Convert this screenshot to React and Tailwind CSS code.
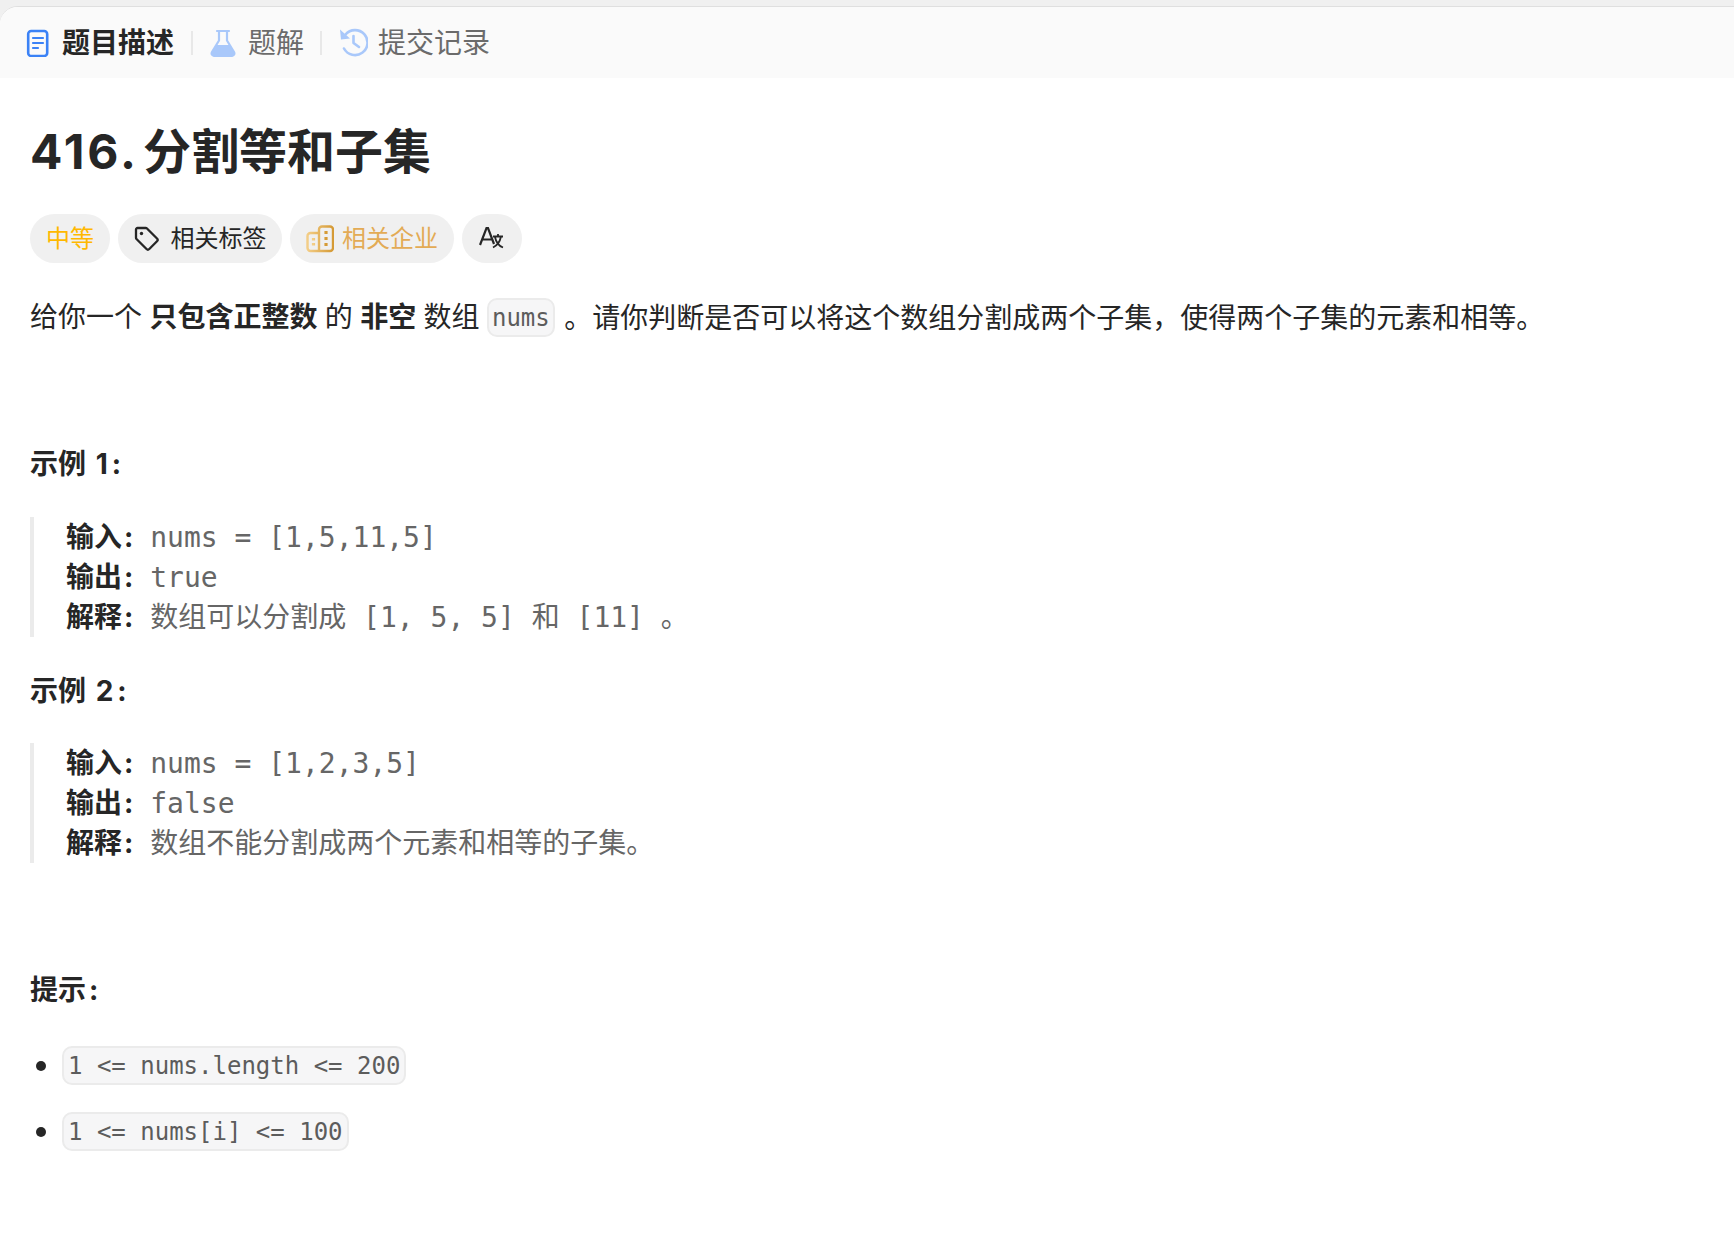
const sans = 'font-["Inter","Noto_Sans_CJK_SC",sans-serif]'

function DocIcon() {
  return (
    <svg width="24" height="28" viewBox="0 0 24 28" fill="none" className="shrink-0">
      <rect x="2.200" y="2" width="19" height="25" rx="3" stroke="#3b82f6" strokeWidth="2.6" />
      <path d="M7 9h10M7 14h10M7 19h5" stroke="#3b82f6" strokeWidth="2.2" strokeLinecap="round" />
    </svg>
  )
}

function FlaskIcon() {
  return (
    <svg width="26" height="28" viewBox="0 0 26 28" fill="none" className="shrink-0">
      <path d="M7 2h12M9 2v9.500L2 23c-1 2 0 4 3 4h16c3 0 4-2 3-4l-7-11.500V2" stroke="#a9c8fa" strokeWidth="2.2" strokeLinecap="round" />
      <path d="M6.500 16h13l5 8c.6 1.500-.5 3-3 3H4.500c-2.500 0-3.600-1.500-3-3z" fill="#a9c8fa" />
    </svg>
  )
}

function HistoryIcon() {
  return (
    <svg width="29" height="29" viewBox="0 0 29 29" fill="none" className="shrink-0">
      <path d="M6.500 6.500A12.500 12.500 0 1 1 5 20.500" stroke="#a9c8fa" strokeWidth="2.600" strokeLinecap="round" />
      <path d="M1 1.500l1 10 9-1z" fill="#a9c8fa" />
      <path d="M14.500 8v7l5.500 4" stroke="#a9c8fa" strokeWidth="2.600" strokeLinecap="round" strokeLinejoin="round" />
    </svg>
  )
}

function TagIcon() {
  return (
    <svg width="26" height="26" viewBox="0 0 26 26" fill="none" className="shrink-0">
      <path d="M2 3.500C2 2.700 2.700 2 3.500 2h8.200c.5 0 1 .2 1.300.5l10 10c.8.8.8 2 0 2.800l-7.700 7.700c-.8.8-2 .8-2.800 0l-10-10c-.3-.3-.5-.8-.5-1.300z" stroke="#262626" strokeWidth="2.300" strokeLinejoin="round" />
      <circle cx="7.500" cy="7.500" r="1.700" fill="#262626" />
    </svg>
  )
}

function CompanyIcon() {
  return (
    <svg width="28" height="28" viewBox="0 0 28 28" fill="none" className="shrink-0">
      <defs>
        <linearGradient id="gold" x1="0" y1="0" x2="1" y2="0">
          <stop offset="0" stopColor="#f3cd86" />
          <stop offset="1" stopColor="#d59a35" />
        </linearGradient>
      </defs>
      <path d="M13 8H4.500A3 3 0 0 0 1.500 11v12a3 3 0 0 0 3 3H24a3 3 0 0 0 3-3V4.500a3 3 0 0 0-3-3h-8a3 3 0 0 0-3 3V26" stroke="url(#gold)" strokeWidth="2.400" />
      <path d="M20 6v3M20 12v3M20 18v3M7.500 13v2.500M7.500 18v2.500" stroke="url(#gold)" strokeWidth="3.200" />
    </svg>
  )
}

function TranslateIcon() {
  return (
    <svg width="26" height="26" viewBox="0 0 26 26" fill="none" className="shrink-0">
      <path d="M1 19L7.500 2h1.500l6 16M3.500 13.500h9.500" stroke="#262626" strokeWidth="2.200" />
      <path d="M14 10.500h10M19 8v2.500M22 10.500c-1 5-4 9-8 11M16 11c1 5 4 9 8 10.500" stroke="#262626" strokeWidth="1.800" />
    </svg>
  )
}

function Pill({ className, children }) {
  return (
    <div className={`h-[49px] rounded-full bg-[#f0f0f0] flex items-center justify-center text-2xl ${className}`}>
      {children}
    </div>
  )
}

function Code({ children, className = 'px-[4px]' }) {
  return (
    <code className={`inline-block h-[39px] leading-[37px] rounded-[10px] border-2 border-[#ebebeb] bg-[#f6f6f7] font-['DejaVu_Sans_Mono',monospace] text-2xl text-[#5c5c5c] whitespace-pre ${className}`}>
      {children}
    </code>
  )
}

function Example({ lines, className }) {
  return (
    <div className={`border-l-4 border-[#ebebeb] pl-[32px] font-['DejaVu_Sans_Mono','Noto_Sans_CJK_SC',monospace] text-[28px] leading-[40px] text-[#666666] whitespace-pre ${className}`}>
      {lines.map(([label, value]) => (
        <div key={label} className="h-10">
          <b className={`${sans} font-bold text-[#262626]`}>{label}<span className="ml-[2px]">:</span></b> {value}
        </div>
      ))}
    </div>
  )
}

function Heading({ className, children }) {
  return <p className={`h-10 text-[28px] leading-10 font-bold ${className}`}>{children}</p>
}

export default function App() {
  return (
    <div className={`h-[1242px] w-[1734px] overflow-hidden bg-[#f0f0f0] pt-[6px] ${sans} text-[#262626]`}>
      <div className="h-full rounded-tl-[18px] border-t border-[#dfdfdf] bg-white">
        <div className="flex h-[71px] items-center rounded-tl-[18px] bg-[#fafafa] pl-[26px] text-[28px] text-[#6b6b6b]">
          <DocIcon />
          <span className="ml-[12px] font-semibold text-[#262626]">题目描述</span>
          <span className="mx-[17px] h-6 w-[2px] bg-[#e8e8e8]" />
          <FlaskIcon />
          <span className="ml-[12px]">题解</span>
          <span className="mr-[17px] ml-[16px] h-6 w-[2px] bg-[#e8e8e8]" />
          <HistoryIcon />
          <span className="ml-[10px]">提交记录</span>
        </div>

        <div className="pl-[30px]">
          <h1 className="mt-[44px] text-5xl leading-[60px] font-bold">
            <span className="tracking-[3px]">416.</span>
            <span className="ml-[4px]">分割等和子集</span>
          </h1>

          <div className="mt-[32px] flex gap-2">
            <Pill className="w-[80px] text-[#ffb800]">中等</Pill>
            <Pill className="w-[164px] gap-[11px]"><TagIcon />相关标签</Pill>
            <Pill className="w-[164px] gap-[8px] text-[#e3ab55]"><CompanyIcon />相关企业</Pill>
            <Pill className="w-[60px]"><TranslateIcon /></Pill>
          </div>

          <p className="mt-[34px] flex h-10 items-center text-[28px] whitespace-pre [word-spacing:-0.5px]">
            给你一个 <b className="font-bold">只包含正整数</b> 的 <b className="font-bold">非空</b> 数组 <Code className="px-[3px]">nums</Code>
            <span className="ml-[2px]"> 。请你判断是否可以将这个数组分割成两个子集<span className="font-['Noto_Sans_CJK_SC',sans-serif]">{'\uff0c'}</span>使得两个子集的元素和相等。</span>
          </p>

          <Heading className="mt-[107px] [word-spacing:3px]">示例 1<span className="ml-[4px]">:</span></Heading>
          <Example
            className="mt-[33px]"
            lines={[
              ['输入', 'nums = [1,5,11,5]'],
              ['输出', 'true'],
              ['解释', '数组可以分割成 [1, 5, 5] 和 [11] 。'],
            ]}
          />

          <Heading className="mt-[34px] [word-spacing:3px]">示例 2<span className="ml-[4px]">:</span></Heading>
          <Example
            className="mt-[32px]"
            lines={[
              ['输入', 'nums = [1,2,3,5]'],
              ['输出', 'false'],
              ['解释', '数组不能分割成两个元素和相等的子集。'],
            ]}
          />

          <Heading className="mt-[107px]">提示<span className="ml-[3px]">:</span></Heading>
          <ul className="mt-[36px] flex flex-col gap-[27px]">
            <li className="flex h-[39px] items-center">
              <span className="ml-[6px] size-[10px] rounded-full bg-[#262626]" />
              <span className="ml-[16px]"><Code>1 &lt;= nums.length &lt;= 200</Code></span>
            </li>
            <li className="flex h-[39px] items-center">
              <span className="ml-[6px] size-[10px] rounded-full bg-[#262626]" />
              <span className="ml-[16px]"><Code>1 &lt;= nums[i] &lt;= 100</Code></span>
            </li>
          </ul>
        </div>
      </div>
    </div>
  )
}
